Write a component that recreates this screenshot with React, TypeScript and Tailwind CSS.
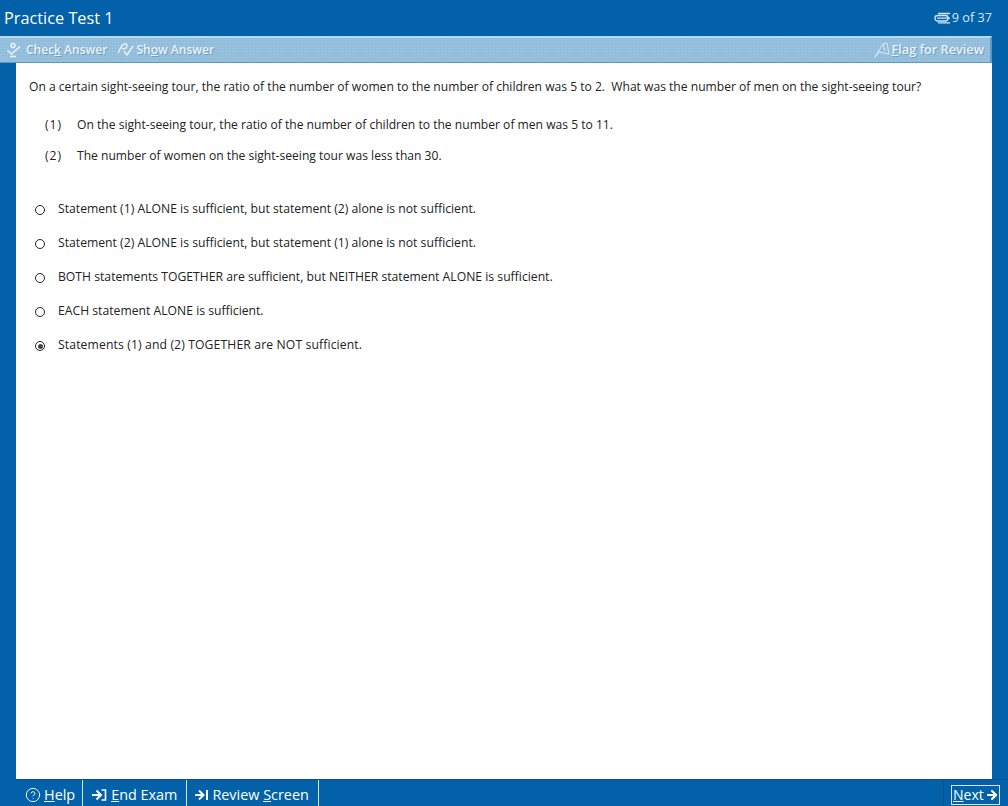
import { ArrowRight, CircleHelp } from 'lucide-react';

const statements = [
  { num: '(1)', text: 'On the sight-seeing tour, the ratio of the number of children to the number of men was 5 to 11.' },
  { num: '(2)', text: 'The number of women on the sight-seeing tour was less than 30.' },
];

const choices = [
  'Statement (1) ALONE is sufficient, but statement (2) alone is not sufficient.',
  'Statement (2) ALONE is sufficient, but statement (1) alone is not sufficient.',
  'BOTH statements TOGETHER are sufficient, but NEITHER statement ALONE is sufficient.',
  'EACH statement ALONE is sufficient.',
  'Statements (1) and (2) TOGETHER are NOT sufficient.',
];

const Radio = ({ checked }: { checked: boolean }) => (
  <span className="mt-[2px] flex h-[10px] w-[10px] flex-none items-center justify-center rounded-full border-[1.5px] border-[#222] bg-white">
    {checked && <span className="h-[5px] w-[5px] rounded-full bg-[#444]" />}
  </span>
);

const CheckIcon = () => (
  <svg width="16" height="17" viewBox="0 0 16 17" fill="none" stroke="#e8f2f8" strokeWidth="1.6">
    <circle cx="7" cy="3.5" r="2" />
    <path d="M1.5 8.5 L5.5 12 L14 4.5" />
    <path d="M4 14.5 H10" />
  </svg>
);

const ShowIcon = () => (
  <svg width="17" height="16" viewBox="0 0 17 16" fill="none" stroke="#e8f2f8" strokeWidth="1.4">
    <path d="M1 11 C3 8 4 3 7 2 C10 1 11 4 9 6 C8 7 6 7 5 6" />
    <path d="M7 9 L10 13 L16 4" />
  </svg>
);

const FlagIcon = () => (
  <svg width="17" height="16" viewBox="0 0 17 16" fill="none" stroke="#dbe9f2" strokeWidth="1">
    <path d="M1 15 L9 2 L13 1 L15 12 L5 10 Z" />
    <path d="M9 2 L11 9" />
  </svg>
);

const NotesIcon = () => (
  <svg width="17" height="12" viewBox="0 0 17 12" fill="none" stroke="#d7e8f3" strokeWidth="1.3">
    <rect x="1" y="3.5" width="13" height="5.5" rx="2.5" />
    <path d="M4 1.5 H16 M3 6.2 H16 M4 10.8 H16" />
  </svg>
);

const EndIcon = () => (
  <svg width="15" height="12" viewBox="0 0 15 12" fill="none" stroke="white" strokeWidth="2">
    <path d="M0 6 H8 M4.5 1.5 L9 6 L4.5 10.5" />
    <path d="M9.5 1 H13.5 V11 H9.5" strokeWidth="1.6" />
  </svg>
);

const ReviewIcon = () => (
  <svg width="14" height="12" viewBox="0 0 14 12" fill="none" stroke="white" strokeWidth="2">
    <path d="M0 6 H8 M4 1.5 L8.5 6 L4 10.5" />
    <path d="M12 1 V11" />
  </svg>
);

export default function App() {
  return (
    <div className="flex h-[806px] w-[1008px] flex-col overflow-hidden bg-[#0261a8] font-['Open_Sans','Liberation_Sans',sans-serif] text-[#222]">
      <div className="flex h-[36px] flex-none items-center justify-between pl-[4px] pr-[16px] text-white">
        <span className="text-[16.3px]">Practice Test 1</span>
        <span className="flex items-center gap-[1px] text-[12.7px] text-[#d7e8f3]">
          <NotesIcon />
          9 of 37
        </span>
      </div>
      <div className="mr-[16px] flex h-[27px] flex-none items-center justify-between border-t-2 border-b border-r-2 border-t-[#b5dbee] border-b-[#5c9ac6] border-r-[#5c9ac6] bg-[#93bedb] bg-[radial-gradient(#a6cae2_1px,transparent_1px)] bg-[length:3px_3px] pl-[6px] pr-[6px] text-[12px] font-semibold text-[#e9f3f9] [text-shadow:1px_1px_0_#6f9fc2]">
        <div className="flex items-center gap-[10px]">
          <span className="flex items-center gap-[4px]">
            <CheckIcon />
            <span>Chec<span className="underline">k</span> Answer</span>
          </span>
          <span className="flex items-center gap-[2px]">
            <ShowIcon />
            <span>Sh<span className="underline">o</span>w Answer</span>
          </span>
        </div>
        <span className="flex items-center gap-[1px] text-[12.7px]">
          <FlagIcon />
          <span><span className="underline">F</span>lag for Review</span>
        </span>
      </div>
      <div className="ml-[16px] mr-[16px] flex-1 bg-white pl-[13px] pt-[15px] text-[12.1px] leading-[18px]">
        <p>On a certain sight-seeing tour, the ratio of the number of women to the number of children was 5 to 2.&nbsp; What was the number of men on the sight-seeing tour?</p>
        <div className="mt-[20px] flex flex-col gap-[13px] pl-[16px]">
          {statements.map((s) => (
            <div key={s.num} className="flex">
              <span className="w-[32px] tracking-[1px]">{s.num}</span>
              <span>{s.text}</span>
            </div>
          ))}
        </div>
        <div className="mt-[35px] flex flex-col gap-[16px] pl-[6px] text-[12.2px]">
          {choices.map((c, i) => (
            <div key={c} className={i === 4 ? 'flex items-center gap-[13px] tracking-[0.12px]' : 'flex items-center gap-[13px]'}>
              <Radio checked={i === 4} />
              <span>{c}</span>
            </div>
          ))}
        </div>
      </div>
      <div className="ml-[16px] flex h-[27px] flex-none items-stretch justify-between border-t border-[#0a4f86] text-[14.4px] text-white">
        <div className="flex">
          <span className="flex items-center gap-[3px] border-r border-[#d5e6f2] pl-[9px] pr-[7px] pt-[4px]">
            <CircleHelp size={16} strokeWidth={1.4} />
            <span><span className="underline">H</span>elp</span>
          </span>
          <span className="flex items-center gap-[4px] border-r border-[#d5e6f2] pl-[9px] pr-[9px] pt-[4px]">
            <EndIcon />
            <span><span className="underline">E</span>nd Exam</span>
          </span>
          <span className="flex items-center gap-[3px] border-r border-[#d5e6f2] pl-[8px] pr-[9px] pt-[4px]">
            <ReviewIcon />
            <span>Review <span className="underline">S</span>creen</span>
          </span>
        </div>
        <div className="flex w-[65px] items-center border-l border-[#0a4f86] pl-[7px] pt-[3px]">
          <span className="flex h-[20px] w-[49px] items-center gap-[1px] border border-[#d5e6f2] pl-[1px] text-[14px] font-medium">
            <span><span className="underline">N</span>ext</span>
            <ArrowRight size={14} strokeWidth={3.5} />
          </span>
        </div>
      </div>
    </div>
  );
}
